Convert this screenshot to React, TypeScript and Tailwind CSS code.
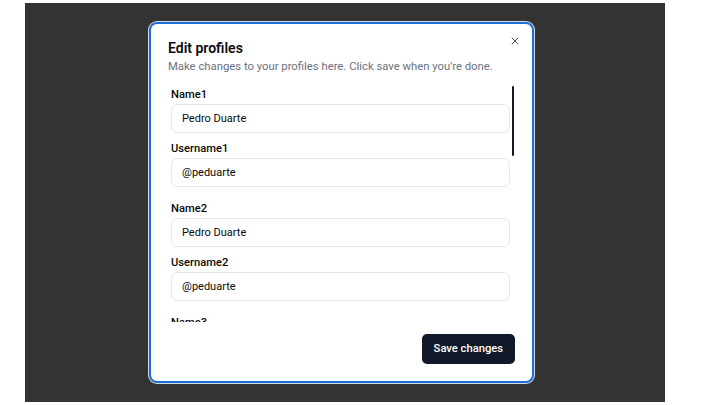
import { X } from "lucide-react";

const profiles = [1, 2, 3, 4, 5, 6, 7];

function Field({ label, value }: { label: string; value: string }) {
  return (
    <div className="flex flex-col">
      <label className="pb-[1px] text-[11.2px] font-medium leading-4 text-[#0a0a0a]">
        {label}
      </label>
      <input
        className="h-[29px] rounded-[6px] border border-[#e5e7eb] bg-white pl-[10px] text-[11px] text-[#0a0a0a] outline-none"
        defaultValue={value}
      />
    </div>
  );
}

export default function App() {
  return (
    <div className="min-h-screen bg-white pt-[3px] font-['Roboto',sans-serif]">
      <div className="ml-[25px] h-[399px] w-[640px] bg-[#333333] pl-[124px] pt-[19px]">
        <div className="relative flex h-[361px] w-[385px] flex-col rounded-[8px] border-2 border-[#1c6fd6] bg-white px-[17px] pt-[14px] shadow-[0_0_0_1px_#d6d9de]">
          <button className="absolute right-[11px] top-[11px] text-[#4b5563]" aria-label="Close">
            <X size={12} strokeWidth={2} />
          </button>

          <h2 className="text-[14px] font-semibold leading-5 text-[#0a0a0a]">Edit profiles</h2>
          <p className="mt-[1px] whitespace-nowrap text-[11.3px] leading-4 text-[#6b7280]">
            Make changes to your profiles here. Click save when you're done.
          </p>

          <div className="relative mt-[11px] h-[236px]">
            <div className="h-full overflow-y-auto pl-[3px] pr-[5px] [scrollbar-width:none]">
              <div className="flex flex-col gap-[14px] pb-3 pt-[1px]">
                {profiles.map((n) => (
                  <div key={n} className="flex flex-col gap-[8px]">
                    <Field label={`Name${n}`} value="Pedro Duarte" />
                    <Field label={`Username${n}`} value="@peduarte" />
                  </div>
                ))}
              </div>
            </div>
            <div className="absolute right-[1px] top-0 h-[70px] w-[2px] rounded-full bg-[#111827]" />
          </div>

          <div className="mt-[12px] flex justify-end">
            <button className="h-[30px] rounded-[5px] bg-[#111827] px-3 text-[11.2px] font-medium text-white">
              Save changes
            </button>
          </div>
        </div>
      </div>
    </div>
  );
}
